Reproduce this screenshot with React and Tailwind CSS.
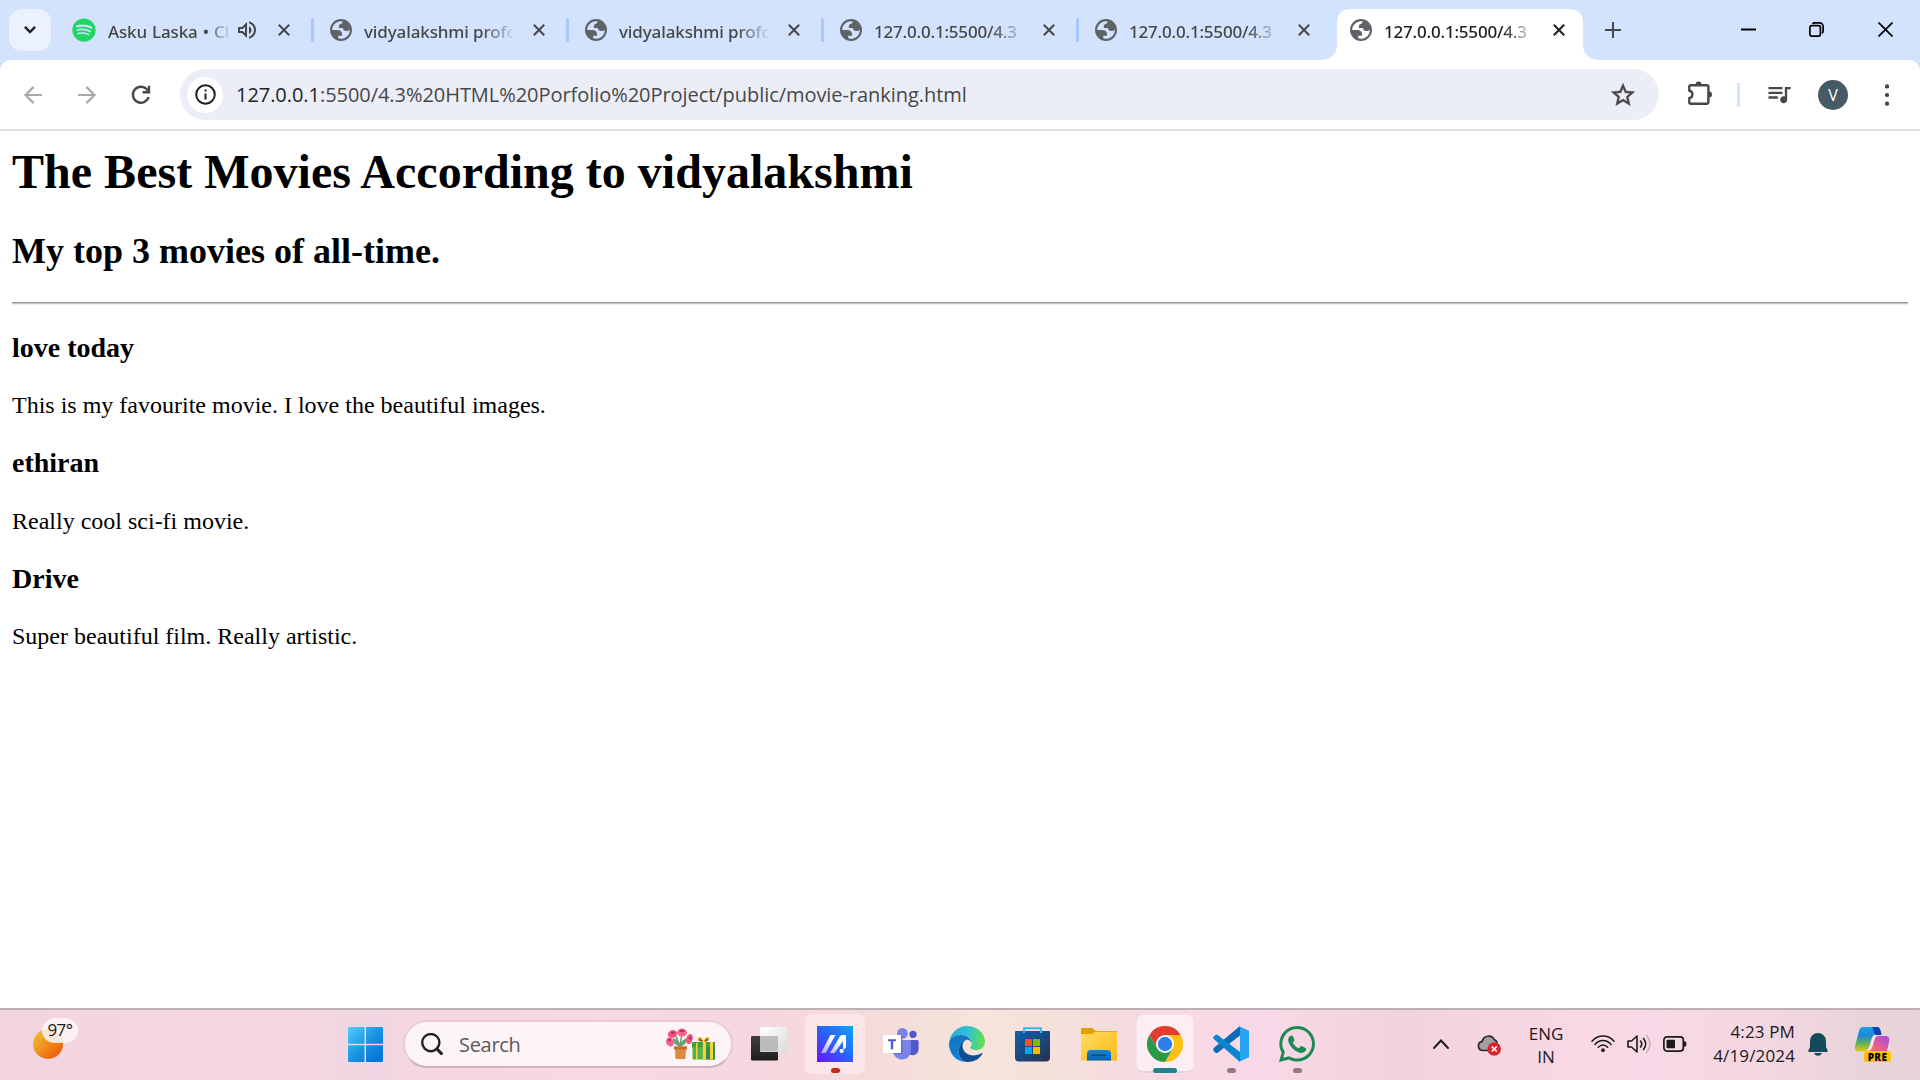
import React from "react";
import { MdOutlineQueueMusic, MdOutlineVolumeUp } from "react-icons/md";
import { FaSpotify } from "react-icons/fa";

const Globe = () => (
  <svg viewBox="2 2 20 20" className="h-[22px] w-[22px] shrink-0" fill="#5f6368" fillRule="evenodd">
    <path d="M12 2a10 10 0 1 0 0 20a10 10 0 0 0 0-20zM4 12h4.4c3.407.022 4.922 1.73 4.543 5.127H9.488v2.47a8.004 8.004 0 0 0 10.498-8.083C19.327 12.504 18.332 13 17 13c-2.137 0-3.206-.916-3.206-2.75h-3.748c-.274-2.728.683-4.092 2.87-4.092 0-.975.327-1.597.811-1.97A8.004 8.004 0 0 0 4 12z" />
  </svg>
);

const Cross = ({ className }) => (
  <svg viewBox="0 0 12 12" className={className} fill="none" stroke="currentColor" strokeWidth="2">
    <path d="M0.8 0.8L11.2 11.2M11.2 0.8L0.8 11.2" />
  </svg>
);

const fade = "[mask-image:linear-gradient(to_right,#000_118px,transparent_152px)]";
const fadeShort = "[mask-image:linear-gradient(to_right,#000_98px,transparent_124px)]";

const Separator = () => <div className="h-[24px] w-[3px] shrink-0 rounded-[1px] bg-[#a8c7fa]" />;

function Tab({ title, tight }) {
  return (
    <div className="flex h-[42px] w-[252px] shrink-0 items-center pl-[16px] text-[#474747]">
      <Globe />
      <span className={`ml-[12px] w-[149px] overflow-hidden pt-[3px] whitespace-nowrap ${fade} ${tight ? "tracking-[-0.2px]" : "tracking-[-0.12px]"}`}>{title}</span>
      <Cross className="ml-[20px] h-[12px] w-[12px]" />
    </div>
  );
}

function TabStrip() {
  return (
    <div className="flex h-[60px] items-start bg-[#d3e3fd] pt-[9px] font-['Noto_Sans','Open_Sans',sans-serif] text-[17px] leading-[24px] font-medium">
      <div className="ml-[9px] flex h-[42px] w-[42px] shrink-0 items-center justify-center rounded-[13px] bg-[#ebf2fe]">
        <svg viewBox="0 0 12 8" className="h-[8px] w-[12px]" fill="none" stroke="#1f1f1f" strokeWidth="2.4">
          <path d="M0.9 0.9L6 6L11.1 0.9" />
        </svg>
      </div>
      <div className="flex h-[42px] items-center text-[#474747]">
        <FaSpotify className="ml-[21px] h-[24px] w-[24px] shrink-0 text-[#1ed760]" />
        <span className={`ml-[12px] w-[120px] overflow-hidden pt-[3px] tracking-[-0.15px] [word-spacing:0.8px] whitespace-nowrap ${fadeShort}`}>Asku Laska • Ch</span>
        <MdOutlineVolumeUp className="ml-[7px] h-[24px] w-[24px] shrink-0" />
        <Cross className="mr-[21px] ml-[19px] h-[12px] w-[12px]" />
        <Separator />
        <Tab title="vidyalakshmi profo" />
        <Separator />
        <Tab title="vidyalakshmi profo" />
        <Separator />
        <Tab title="127.0.0.1:5500/4.3" tight />
        <Separator />
        <Tab title="127.0.0.1:5500/4.3" tight />
      </div>
      <div className="relative ml-[6px] flex h-[51px] w-[246px] shrink-0 items-start rounded-t-[13px] bg-white text-[#1f1f1f]">
        <svg viewBox="0 0 15 15" className="absolute bottom-0 left-[-15px] h-[15px] w-[15px]" fill="#fff"><path d="M15 0V15H0A15 15 0 0 0 15 0z" /></svg>
        <svg viewBox="0 0 15 15" className="absolute right-[-15px] bottom-0 h-[15px] w-[15px]" fill="#fff"><path d="M0 0V15H15A15 15 0 0 1 0 0z" /></svg>
        <div className="flex h-[42px] items-center pl-[13px]">
          <Globe />
          <span className={`ml-[12px] w-[149px] overflow-hidden pt-[3px] tracking-[-0.2px] whitespace-nowrap ${fade}`}>127.0.0.1:5500/4.3</span>
          <Cross className="ml-[20px] h-[12px] w-[12px]" />
        </div>
      </div>
      <div className="flex h-[42px] items-center">
        <svg viewBox="0 0 16 16" className="ml-[22px] h-[16px] w-[16px]" fill="none" stroke="#474747" strokeWidth="2"><path d="M8 0V16M0 8H16" /></svg>
        <svg viewBox="0 0 15 15" className="mb-[2px] ml-[120px] h-[15px] w-[15px]" stroke="#000" strokeWidth="2"><path d="M0 7.5H15" /></svg>
        <svg viewBox="0 0 15 15" className="mb-[1px] ml-[53px] h-[15px] w-[15px]" fill="none" stroke="#000" strokeWidth="1.7">
          <rect x="0.9" y="3.6" width="10.5" height="10.5" rx="2" />
          <path d="M3.6 1.9C4 1.2 4.8 0.9 5.5 0.9H10.5A3.6 3.6 0 0 1 14.1 4.5V9.3C14.1 10.2 13.7 10.9 13 11.3" />
        </svg>
        <svg viewBox="0 0 15 15" className="mb-[1px] ml-[54px] h-[15px] w-[15px]" fill="none" stroke="#000" strokeWidth="1.7"><path d="M0.5 0.5L14.5 14.5M14.5 0.5L0.5 14.5" /></svg>
      </div>
    </div>
  );
}

function Toolbar() {
  return (
    <div className="bg-[#d3e3fd]">
      <div className="flex h-[71px] items-center rounded-t-[11px] border-b-2 border-[#dedfe0] bg-white">
        <svg viewBox="0 0 18 18" className="ml-[24px] h-[18px] w-[18px]" fill="none" stroke="#a9a9a9" strokeWidth="2.2"><path d="M18 9H1.6M9.6 0.9L1.5 9L9.6 17.1" /></svg>
        <svg viewBox="0 0 18 18" className="ml-[36px] h-[18px] w-[18px]" fill="none" stroke="#a9a9a9" strokeWidth="2.2"><path d="M0 9H16.4M8.4 0.9L16.5 9L8.4 17.1" /></svg>
        <svg viewBox="0 0 20 20" className="ml-[35px] h-[20px] w-[20px]" fill="none" stroke="#474747" strokeWidth="2.4">
          <path d="M17.6 12A8 8 0 1 1 15.9 4.4L17.6 6.2" />
          <path d="M18 0.8V7.3H11.6" />
        </svg>
        <div className="ml-[29px] flex h-[51px] w-[1479px] items-center rounded-full bg-[#ebeef7]">
          <div className="ml-[7px] flex h-[36px] w-[36px] items-center justify-center rounded-full bg-white">
            <svg viewBox="0 0 21 21" className="h-[21px] w-[21px]" fill="none" stroke="#1f1f1f" strokeWidth="2">
              <circle cx="10.5" cy="10.5" r="9.3" />
              <path d="M10.5 9.4V15.6M10.5 5.4V7.6" />
            </svg>
          </div>
          <span className="ml-[13px] w-[1370px] font-['Open_Sans','Noto_Sans',sans-serif] text-[20px] leading-[28px] tracking-[-0.05px] text-[#474747]">
            <span className="text-[#1f1f1f]">127.0.0.1</span>:5500/4.3%20HTML%20Porfolio%20Project/public/movie-ranking.html
          </span>
          <svg viewBox="0 0 24 24" className="ml-[3px] h-[28px] w-[28px]" fill="#474747" stroke="#474747" strokeWidth="0.4">
            <path d="M22 9.24l-7.190-.62L12 2 9.190 8.630 2 9.240l5.460 4.730L5.820 21 12 17.270 18.180 21l-1.630-7.030L22 9.240zM12 15.400l-3.760 2.270 1-4.280-3.320-2.880 4.380-.38L12 6.100l1.710 4.040 4.380.38-3.320 2.880 1 4.280L12 15.400z" />
          </svg>
        </div>
        <svg viewBox="0 0 25 24" className="mb-[3px] ml-[29px] h-[24px] w-[25px]" fill="none" stroke="#474747" strokeWidth="2.4" strokeLinejoin="round">
          <path d="M2.8 4.2H18.8A1.6 1.6 0 0 1 20.4 5.8V21.2A1.6 1.6 0 0 1 18.8 22.8H2.8A1.4 1.4 0 0 1 1.3 21.4V17.2C5.4 16.6 5.4 10.4 1.3 9.8V5.6A1.4 1.4 0 0 1 2.8 4.2z" />
          <path d="M7.6 3.6A3 3 0 0 1 13.6 3.6zM21 10.4A3 3 0 0 1 21 16.4z" fill="#474747" stroke="none" />
        </svg>
        <div className="ml-[24px] h-[24px] w-[3px] bg-[#d3e3fd]" />
        <MdOutlineQueueMusic className="mb-[2px] ml-[25px] h-[28px] w-[28px] text-[#474747]" />
        <div className="ml-[25px] flex h-[30px] w-[30px] items-center justify-center rounded-full bg-[#455a64] font-['Open_Sans',sans-serif] text-[16px] leading-none text-white">V</div>
        <svg viewBox="0 0 4 22" className="ml-[37px] h-[22px] w-[4px]" fill="#474747"><circle cx="2" cy="2.4" r="2.1" /><circle cx="2" cy="11" r="2.1" /><circle cx="2" cy="19.6" r="2.1" /></svg>
      </div>
    </div>
  );
}

const movies = [
  ["love today", "This is my favourite movie. I love the beautiful images."],
  ["ethiran", "Really cool sci-fi movie."],
  ["Drive", "Super beautiful film. Really artistic."],
];

function Page() {
  return (
    <div className="h-[877px] overflow-hidden bg-white px-[12px] pt-[13px] font-['Liberation_Serif','Times_New_Roman',serif] text-[24px] text-black">
      <h1 className="text-[48px] leading-[55px] font-bold tracking-[0.02px]">The Best Movies According to vidyalakshmi</h1>
      <h2 className="mt-[32px] text-[36px] leading-[41px] font-bold">My top 3 movies of all-time.</h2>
      <div className="mt-[30px] mb-[27px] h-[3px] border-t border-b border-t-[#9a9a9a] border-b-[#eeeeee] bg-[#c4c4c4]" />
      {movies.map(([title, text]) => (
        <section key={title}>
          <h3 className="text-[28px] leading-[32px] font-bold">{title}</h3>
          <p className="mt-[28.2px] mb-[28.2px] leading-[27px]">{text}</p>
        </section>
      ))}
    </div>
  );
}

const icon = "h-[36px] w-[36px] shrink-0";

const Search = () => (
  <div className="ml-[20px] flex h-[48px] w-[330px] shrink-0 items-center rounded-full border-2 border-[#e6cdd6] border-b-[#ccb3bc] bg-[#fdf4f7]">
    <svg viewBox="0 0 22 22" className="ml-[16px] h-[22px] w-[22px]" fill="none" stroke="#222" strokeWidth="2.4" strokeLinecap="round"><circle cx="9.8" cy="9.6" r="8.6" /><path d="M15.8 15.8L20.4 20.6" strokeWidth="3" /></svg>
    <span className="ml-[16px] w-[207px] pt-px font-['Open_Sans',sans-serif] text-[20px] tracking-[-0.3px] text-[#5c585a]">Search</span>
    <svg viewBox="0 0 50 33" className="h-[33px] w-[50px]">
      <path d="M14 18L5 13M14 18L9 6M14 18L16 5M14 18L23 11" stroke="#5f9b62" strokeWidth="1.4" fill="none" />
      <path d="M14 19C8 16 7 13 7 10C11 11 13 14 14 18C15 13 18 11 21 10C21 14 19 17 14 19z" fill="#6d9e77" />
      <ellipse cx="6.5" cy="6" rx="4.8" ry="3.8" fill="#f0567f" transform="rotate(-25 6.5 6)" /><ellipse cx="16" cy="4.5" rx="5" ry="4" fill="#f4668c" />
      <ellipse cx="4" cy="14" rx="3.8" ry="4.6" fill="#f0618a" transform="rotate(-25 4 14)" /><ellipse cx="23.5" cy="11" rx="3.3" ry="5.2" fill="#ea5a82" transform="rotate(15 23.5 11)" />
      <ellipse cx="7" cy="4.8" rx="2.2" ry="1.2" fill="#b8325c" /><ellipse cx="16" cy="3" rx="2.6" ry="1.2" fill="#b8325c" /><ellipse cx="3.6" cy="12" rx="1.6" ry="1.4" fill="#b8325c" /><ellipse cx="24" cy="10" rx="1.2" ry="2" fill="#b8325c" />
      <path d="M8 18.5H21V21.5H20L19.4 31H9.6L9 21.5H8z" fill="#dd8a3e" /><path d="M8 18.5H21V21.5H8z" fill="#c46f2a" />
      <path d="M26 14H49V20H26z" fill="#3f9f45" /><path d="M26.500 19H49V31.500H26.500z" fill="#52b34c" /><path d="M40 19H49V31.500H40z" fill="#2f8f46" />
      <path d="M30 15H31.600V31.500H30zM44 14H47V31.500H44zM36.800 14H40V31.500H36.800z" fill="#f9cf3a" />
      <path d="M37.5 14C31 14 30.5 10 33 9C35.5 8.4 37 11 37.5 14C38 11 39.5 8.4 42 9C44.5 10 44 14 37.5 14z" fill="#f2b92c" /><path d="M33 11.2L36 13M42 11.2L39 13" stroke="#7a4a10" strokeWidth="1.6" />
    </svg>
  </div>
);

const Dot = ({ className }) => <div className={`absolute h-[5px] rounded-full ${className}`} />;

function AppIcons() {
  return (
    <>
      <svg viewBox="0 0 35 35" className="ml-[270px] h-[35px] w-[35px] shrink-0">
        <defs><linearGradient id="win" gradientUnits="userSpaceOnUse" x1="0" y1="0" x2="30" y2="30"><stop offset="0" stopColor="#4fd0fd" /><stop offset="0.55" stopColor="#1c97e2" /><stop offset="1" stopColor="#0478d4" /></linearGradient></defs>
        <path fill="url(#win)" d="M1.2 0H16.5V16.8H0V1.2A1.2 1.2 0 0 1 1.2 0zM18 0H33.8A1.2 1.2 0 0 1 35 1.2V16.8H18zM0 18.2H16.5V35H1.2A1.2 1.2 0 0 1 0 33.8zM18 18.2H35V33.8A1.2 1.2 0 0 1 33.8 35H18z" />
      </svg>
      <Search />
      <svg viewBox="0 0 36 36" className={`ml-[18px] ${icon}`}>
        <defs><linearGradient id="tv" x1="0" y1="0" x2="0" y2="1"><stop offset="0" stopColor="#40403e" /><stop offset="1" stopColor="#1e1e1e" /></linearGradient><linearGradient id="tw" x1="0" y1="0" x2="1" y2="1"><stop offset="0" stopColor="#fff" /><stop offset="1" stopColor="#dcdcdc" /></linearGradient></defs>
        <rect x="0" y="10" width="27" height="24.6" rx="1.4" fill="url(#tv)" />
        <rect x="9" y="1" width="27" height="25" rx="1.2" fill="url(#tw)" /><rect x="9" y="10" width="18" height="15.4" fill="#bcbcbc" />
      </svg>
      <div className="relative ml-[18px] flex h-[60px] w-[60px] shrink-0 items-center justify-center rounded-[7px] bg-[#fce6e8]">
        <svg viewBox="0 0 36 36" className={icon}>
          <defs><linearGradient id="ma" x1="1" y1="0" x2="0" y2="1"><stop offset="0" stopColor="#08a6ff" /><stop offset="0.5" stopColor="#2a62f8" /><stop offset="1" stopColor="#6a12fb" /></linearGradient><linearGradient id="mw" x1="0.6" y1="0" x2="0" y2="1"><stop offset="0.2" stopColor="#fff" /><stop offset="1" stopColor="#a9a8fb" /></linearGradient></defs>
          <path d="M0 0H36V36H0z" fill="url(#ma)" />
          <path d="M13.5 9H18.5L8.5 27H4zM26 9H29V22L26 24V15L17.5 27H13L22.5 11C23.3 9.6 24.4 9 26 9z" fill="url(#mw)" />
          <circle cx="24.6" cy="25" r="2.1" fill="#fff" />
        </svg>
        <Dot className="bottom-px left-[26px] w-[9px] bg-[#c42b1c]" />
      </div>
      <svg viewBox="0 0 36 36" className={`ml-[18px] ${icon}`}>
        <circle cx="30" cy="8.3" r="3.6" fill="#5059c9" /><path d="M25 14H34.4A1.4 1.4 0 0 1 35.6 15.4V23A6 6 0 0 1 27 28.6z" fill="#5059c9" />
        <circle cx="19.4" cy="7.4" r="5.4" fill="#7b83eb" /><path d="M11 14H26.5A1.5 1.5 0 0 1 28 15.5V25.4A9 9 0 0 1 10.4 27z" fill="#7b83eb" />
        <rect x="10" y="9.6" width="9.400" height="18.400" fill="#4b53bc" opacity="0.5" /><rect x="0" y="9" width="18" height="18" fill="#fff" />
        <path d="M5 13.2H13V15.3H10.2V23.2H7.8V15.3H5z" fill="#5059c9" />
      </svg>
      <svg viewBox="0 0 36 36" className={`ml-[30px] ${icon}`}>
        <defs>
          <linearGradient id="e1" x1="0" y1="0.3" x2="1" y2="0.4"><stop offset="0" stopColor="#2aa7e0" /><stop offset="0.5" stopColor="#2fc2d4" /><stop offset="1" stopColor="#66e04d" /></linearGradient>
          <linearGradient id="e2" x1="0.3" y1="0" x2="0.5" y2="1"><stop offset="0" stopColor="#1173b8" /><stop offset="1" stopColor="#0f86e0" /></linearGradient>
        </defs>
        <path d="M0.3 16C1.5 6.500 9 0 18 0C28.500 0 36 7.500 36 15.500C36 21 32 24.200 27.300 24.200C23.500 24.200 21.200 22.900 21.200 21.600C21.200 20.800 22.800 20 22.800 17.500C22.800 13 19 9 12.500 9C6.500 9 2 12 0.300 16z" fill="url(#e1)" />
        <path d="M0 18C0.300 12 6 9 12 9C17.500 9 22.300 12.500 22.800 17C21.500 14.600 19.500 13.400 17.500 13.800C13.500 14.800 9.600 19.500 9.600 25C9.600 30 12.500 34.500 16.500 36C7 35.600 0 27.500 0 18z" fill="url(#e2)" />
        <path d="M17.500 13.800C14.600 15 13.400 18 13.500 20.500C13.800 25.500 18.600 29.400 24.500 29.400C29 29.400 31.500 27.600 32.700 27C33.500 26.700 33.700 27.300 33.300 28C30.500 33 25 36 18.500 36C13 35.800 9.600 30.500 9.600 25C9.600 19.500 13.500 14.800 17.500 13.800z" fill="#114f94" />
      </svg>
      <svg viewBox="0 0 36 36" className={`ml-[30px] ${icon}`}>
        <defs><linearGradient id="st" x1="0" y1="0" x2="1" y2="1"><stop offset="0" stopColor="#0b62b0" /><stop offset="1" stopColor="#28304e" /></linearGradient></defs>
        <path d="M9 7V2.200H26V7" fill="none" stroke="#32b8ea" strokeWidth="2" />
        <path d="M1 5H34A1 1 0 0 1 35 6V31.500A4 4 0 0 1 31 35.500H4A4 4 0 0 1 0 31.500V6A1 1 0 0 1 1 5z" fill="url(#st)" />
        <path d="M9 5V7M26 5V7" stroke="#32b8ea" strokeWidth="2" />
        <path d="M10 13H17V20H10z" fill="#f25022" /><path d="M18 13H25V20H18z" fill="#7fba00" /><path d="M10 21H17V28H10z" fill="#00a4ef" /><path d="M18 21H25V28H18z" fill="#ffb900" />
      </svg>
      <svg viewBox="0 0 36 36" className={`ml-[30px] ${icon}`}>
        <defs><linearGradient id="fe" x1="0" y1="0" x2="1" y2="1"><stop offset="0" stopColor="#ffdc62" /><stop offset="1" stopColor="#fdb813" /></linearGradient><linearGradient id="fb" x1="0" y1="0" x2="0" y2="1"><stop offset="0" stopColor="#1083d8" /><stop offset="1" stopColor="#0560b0" /></linearGradient></defs>
        <path d="M0 3A1 1 0 0 1 1 2H11L15 5H35A1 1 0 0 1 36 6V12H0z" fill="#e0a000" />
        <path d="M0 8H11L14.500 5.800H35A1 1 0 0 1 36 6.800V34.500H0z" fill="url(#fe)" />
        <path d="M6 34.500V28A4 4 0 0 1 10 24H26A4 4 0 0 1 30 28V34.500z" fill="url(#fb)" /><path d="M10.500 29.200H25" stroke="#0a4d8c" strokeWidth="1.600" />
      </svg>
      <div className="relative ml-[20px] flex h-[58px] w-[56px] shrink-0 items-center justify-center rounded-[6px] border-b-2 border-[#e8d0da] bg-[#fdeef3] shadow-[0_0_0_1px_#f5dfe8]">
        <svg viewBox="0 0 36 36" className="mt-px h-[36px] w-[36px]">
          <path d="M18 9H33.590A18 18 0 0 0 2.410 9L10.200 22.500z" fill="#e33b2e" />
          <path d="M25.800 22.500L18 36A18 18 0 0 0 33.590 9H18z" fill="#fbc116" />
          <path d="M10.200 22.500L2.410 9A18 18 0 0 0 18 36L25.800 22.500z" fill="#2b9a48" />
          <circle cx="18" cy="18" r="9" fill="#fff" /><circle cx="18" cy="18" r="7.200" fill="#2f7de9" />
        </svg>
        <Dot className="bottom-[-2px] left-[16px] w-[24px] bg-[#22808f]" />
      </div>
      <div className="relative ml-[20px] h-[36px] w-[36px] shrink-0">
        <svg viewBox="0 0 36 36" className={icon}>
          <path d="M27 0L1.300 21.500C0 22.800 0 24.200 1 25.400L2.200 26.500C3 27.200 4.200 27.200 5 26.500L27 9.500z" fill="#0a6cb4" />
          <path d="M27 36L1.300 13.500C0 12.400 0 11.400 1 10.200L2.200 9.200C3 8.600 4.200 8.600 5 9.200L27 26z" fill="#0a84d0" />
          <path d="M26 0.200L35 4.200A1.500 1.500 0 0 1 36 5.600V30.400A1.500 1.500 0 0 1 35 31.800L26 35.800C26.700 35.400 27 34.800 27 34V2C27 1.200 26.700 0.600 26 0.200z" fill="#27a4f2" />
        </svg>
        <Dot className="top-[42px] left-[14px] w-[9px] bg-[#8f7b84]" />
      </div>
      <div className="relative ml-[30px] h-[36px] w-[36px] shrink-0">
        <svg viewBox="0 0 36 36" className={icon} fill="#1d8a54">
          <path fillRule="evenodd" d="M18.200 0A17.800 17.800 0 0 1 18.200 35.600C15.300 35.600 12.500 34.900 10 33.500L0 36L2.600 26.500A17.800 17.800 0 0 1 18.200 0zM18.200 3.100A14.700 14.700 0 0 0 5.900 26L4.300 31.700L10.400 30.200A14.700 14.700 0 1 0 18.200 3.100z" />
          <path d="M12.700 9.600C12 9.500 11.300 9.700 10.800 10.300C9.400 11.700 8.900 13.200 9.300 15.200C10.300 19.800 15.500 25.200 20.600 26.700C23 27.300 25 26.700 26.500 25.100C27.200 24.200 27.300 22.900 26.900 22.300L22.800 20.100C22.300 19.900 21.900 20 21.500 20.400L19.900 22.200C17.400 21.400 14.900 18.800 13.800 16.400L15.200 14.800C15.500 14.400 15.600 13.900 15.400 13.500L13.900 10.300C13.700 9.800 13.300 9.600 12.700 9.600z" />
        </svg>
        <Dot className="top-[42px] left-[14px] w-[9px] bg-[#8f7b84]" />
      </div>
    </>
  );
}

function Tray() {
  return (
    <>
      <svg viewBox="0 0 16 10" className="ml-[118px] h-[10px] w-[16px] shrink-0" fill="none" stroke="#1c1a1b" strokeWidth="1.900" strokeLinecap="round"><path d="M1 9L8 1.500L15 9" /></svg>
      <svg viewBox="0 0 24 22" className="mt-[2px] ml-[28px] h-[22px] w-[24px] shrink-0">
        <path d="M5.500 16.500A4.600 4.600 0 0 1 5.200 7.400A6.500 6.500 0 0 1 17.300 5.600A4.600 4.600 0 0 1 19 13L12 16.500z" fill="#a3a0a1" stroke="#2b292a" strokeWidth="1.700" />
        <circle cx="17.200" cy="15" r="6.800" fill="#d9252e" /><path d="M14.700 12.500L19.700 17.500M19.700 12.500L14.700 17.500" stroke="#fff" strokeWidth="1.700" />
      </svg>
      <div className="mt-px ml-[25px] w-[40px] shrink-0 text-center leading-[23px] tracking-[-0.1px]">ENG<br />IN</div>
      <svg viewBox="0 0 24 18" className="ml-[25px] h-[18px] w-[24px] shrink-0" fill="none" stroke="#1c1a1b" strokeWidth="1.500" strokeLinecap="round">
        <path d="M1 6.200C7 -0.700 17 -0.700 23 6.200M4 9.400C8.500 4.200 15.500 4.200 20 9.400M7.300 12.300C10 9.300 14 9.300 16.700 12.300" /><circle cx="12" cy="15.200" r="1.900" fill="#1c1a1b" stroke="none" />
      </svg>
      <svg viewBox="0 0 24 20" className="ml-[12px] h-[20px] w-[24px] shrink-0" fill="none" stroke="#1c1a1b" strokeWidth="1.600" strokeLinecap="round" strokeLinejoin="round">
        <path d="M1 7H4.500L10 2V18L4.500 13H1z" /><path d="M13.500 7C15 8.800 15 11.200 13.500 13M16.500 4.500C19.300 7.800 19.300 12.200 16.500 15.500" /><path d="M19.500 1.500C24 6.500 24 13.500 19.500 18.500" stroke="#c9b0ba" />
      </svg>
      <svg viewBox="0 0 24 16" className="ml-[12px] h-[16px] w-[24px] shrink-0" fill="none" stroke="#1c1a1b" strokeWidth="1.700"><rect x="0.900" y="0.900" width="19.400" height="14.200" rx="3" /><rect x="3.500" y="3.800" width="8.500" height="8.400" rx="1" fill="#1c1a1b" stroke="none" /><path d="M21 5.500H22A1.300 1.300 0 0 1 23.300 6.800V9.200A1.300 1.300 0 0 1 22 10.500H21z" fill="#1c1a1b" stroke="none" /></svg>
      <div className="ml-[8px] w-[100px] shrink-0 pb-px text-right leading-[24px] tracking-[0.15px]">4:23 PM<br />4/19/2024</div>
      <svg viewBox="0 0 20 23" className="ml-[13px] h-[23px] w-[20px] shrink-0" fill="#154a59"><path d="M10 0A8 8 0 0 1 18 8V14L19.700 17.500Q20 19 18.500 19H1.500Q0 19 0.300 17.500L2 14V8A8 8 0 0 1 10 0zM6.200 20H13.800A3.900 3.400 0 0 1 6.200 20z" /></svg>
      <div className="relative ml-[27px] h-[34px] w-[36px] shrink-0">
        <svg viewBox="0 0 36 34" className="h-[34px] w-[36px]">
          <defs>
            <linearGradient id="c1" x1="0" y1="0" x2="0" y2="1"><stop offset="0" stopColor="#18a4e4" /><stop offset="0.350" stopColor="#1f86d6" /><stop offset="0.700" stopColor="#6cb84c" /><stop offset="1" stopColor="#f2c21c" /></linearGradient>
            <linearGradient id="c2" x1="1" y1="0" x2="0" y2="1"><stop offset="0" stopColor="#a14be8" /><stop offset="0.500" stopColor="#e0599c" /><stop offset="1" stopColor="#fb7a4a" /></linearGradient>
          </defs>
          <path d="M8 0H22C25 0 25.500 3 26.500 7H22C18 7 17 10 16 14L14 20C13 23 11 24.500 8 24.500H3C0 24.500 -0.500 21 0.300 18L4 4C4.800 1.500 6 0 8 0z" fill="url(#c1)" />
          <path d="M17 0H22C25 0 25.500 3 26.500 8H21C18.500 8 19 2 17 0z" fill="#1440b4" />
          <path d="M22 9H31C34 9 34.800 12 34 15L32 24H11C14.500 24 15 22 16 19L18.500 11.500C19 9.800 20 9 22 9z" fill="url(#c2)" />
          <path d="M19.500 9H22.500C19.800 10 19.500 13 18.300 17C17 21.500 16 24.500 10 24.500C14 23.500 14.600 20.500 16 15.500C16.900 12 17.300 9.500 19.500 9z" fill="#f7e4ec" />
        </svg>
        <div className="absolute right-0 bottom-[-1px] flex h-[11px] w-[27px] items-center justify-center rounded-[3px] bg-[#fdc300] font-['Open_Sans',sans-serif] text-[10px] leading-none font-extrabold tracking-[0.3px] text-black">PRE</div>
      </div>
    </>
  );
}

function Taskbar() {
  return (
    <div className="flex h-[72px] items-center border-t-2 border-[#bdafb4] bg-[linear-gradient(to_right,#f1d4de_0px,#f4d6df_120px,#f7d8e2_200px,#f5d6e1_310px,#efd7e2_360px,#f7d6e3_440px,#f7d8e4_600px,#f7d7df_760px,#f4dcda_880px,#f7e4da_980px,#f5dfdc_1080px,#f7d9e4_1160px,#f9d9e7_1260px,#f0d3dd_1400px,#f5d5e0_1480px,#fad9e7_1600px,#f5d7e3_1740px,#ead4db_1860px,#e6d3d8_1920px)] pb-[2px] font-['Open_Sans','Noto_Sans',sans-serif] text-[17px] text-[#1c1a1b]">
      <div className="relative ml-[33px] h-[50px] w-[45px] shrink-0">
        <div className="mt-[10px] h-[30px] w-[30px] rounded-full bg-[linear-gradient(135deg,#f0bd35_10%,#f08c1c_50%,#f0640f_80%)]" />
        <div className="absolute top-[-1px] left-[9px] flex h-[25px] w-[36px] items-center justify-center rounded-full bg-[#fbf6f8]/85 pb-px text-[17px] tracking-[-0.5px]">97°</div>
      </div>
      <AppIcons />
      <Tray />
    </div>
  );
}

export default function App() {
  return (
    <div className="h-[1080px] w-[1920px] overflow-hidden bg-white">
      <TabStrip />
      <Toolbar />
      <Page />
      <Taskbar />
    </div>
  );
}
